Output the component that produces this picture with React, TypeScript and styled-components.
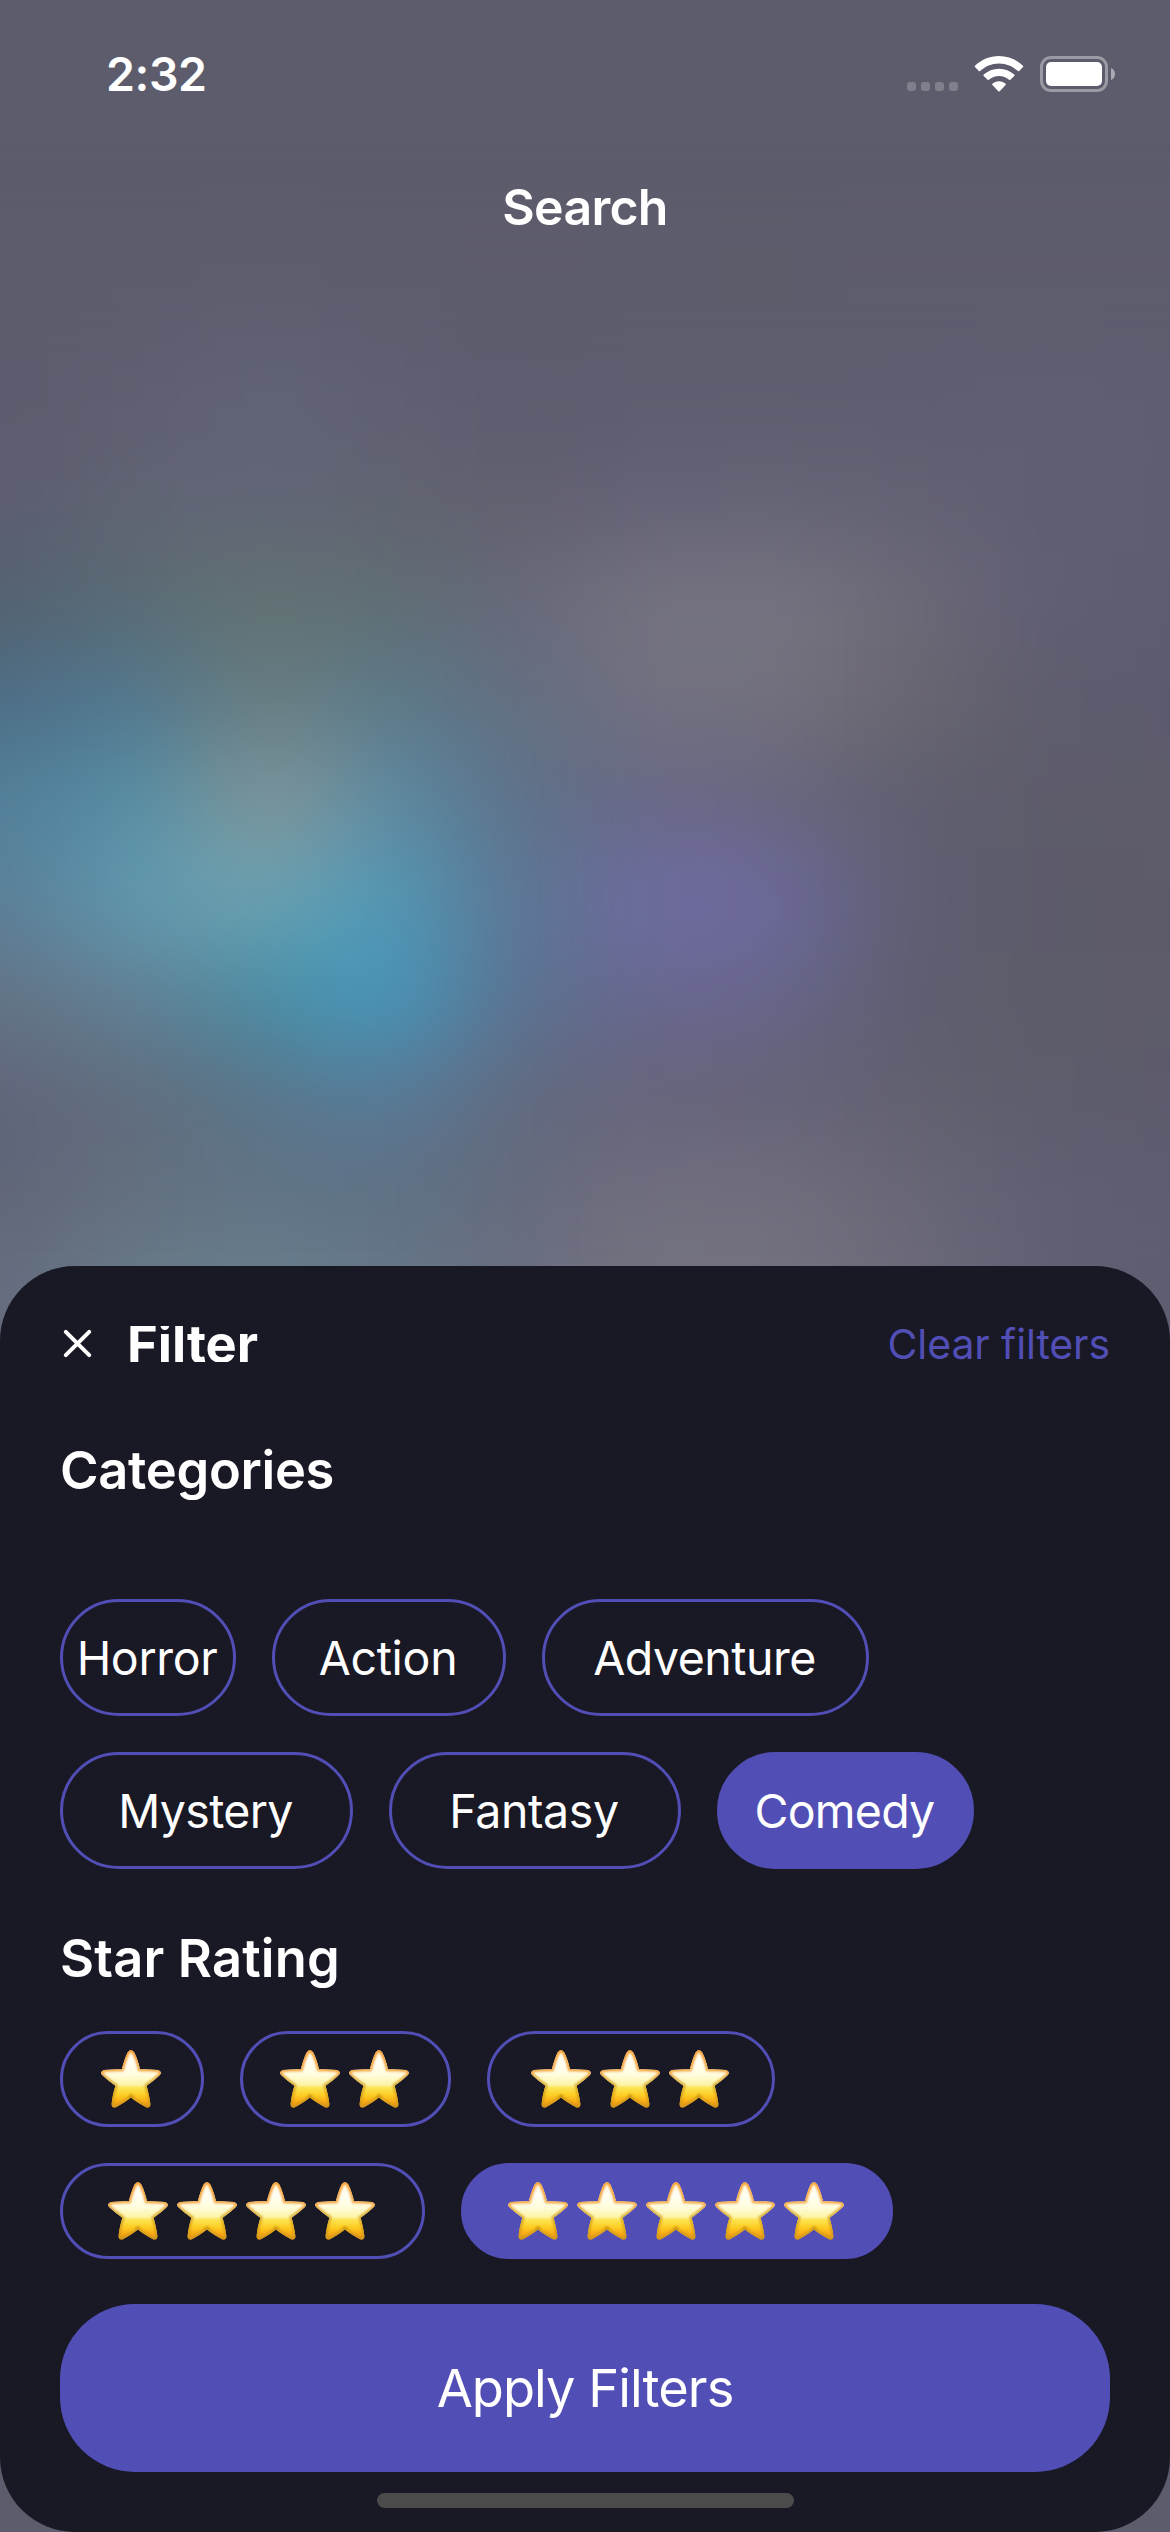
import React, { useState } from "react";
import styled, { createGlobalStyle } from "styled-components";

const ACCENT = "#514eb5";
const SHEET = "#191825";

const GlobalStyle = createGlobalStyle`
  *, *::before, *::after { box-sizing: border-box; }
  body { margin: 0; background: #5d5c6c; }
  button { font: inherit; color: inherit; background: none; border: 0; padding: 0; margin: 0; cursor: pointer; }
  h1, h2 { margin: 0; }
`;

const Screen = styled.main`
  position: relative;
  display: flex;
  flex-direction: column;
  width: 1170px;
  height: 2532px;
  overflow: hidden;
  background: #5d5c6c;
  color: #fff;
  font-family: Inter, "Liberation Sans", sans-serif;
`;

/* Frosted backdrop: bands of colour, softened into each other. */
const Backdrop = styled.div`
  position: absolute;
  inset: 250px -140px auto;
  display: flex;
  flex-direction: column;
  filter: blur(44px);
`;

const Band = styled.div<{ $colors: string[] }>`
  height: 100px;
  background: linear-gradient(
    to right,
    ${({ $colors }) => $colors.map((c, i) => `${c} ${140 + i * 130}px`).join(", ")}
  );
`;

const Spot = styled.div<{ $x: number; $y: number; $w: number; $h: number; $color: string }>`
  position: absolute;
  left: ${({ $x, $w }) => $x - $w / 2}px;
  top: ${({ $y, $h }) => $y - $h / 2}px;
  width: ${({ $w }) => $w}px;
  height: ${({ $h }) => $h}px;
  background: radial-gradient(closest-side, ${({ $color }) => $color}, transparent);
`;

const StatusBar = styled.header`
  position: relative;
  display: flex;
  align-items: center;
  justify-content: space-between;
  height: 148px;
  padding: 0 55px 0 106px;
`;

const Time = styled.span`
  font-size: 46.5px;
  font-weight: 600;
  letter-spacing: -0.46px;
`;

const StatusIcons = styled.div`
  display: flex;
  align-items: center;
`;

const CellDots = styled.div`
  display: flex;
  gap: 5px;
  margin: 25px 16px 0 0;
`;

const CellDot = styled.i`
  width: 9px;
  height: 9px;
  border-radius: 3px;
  background: rgba(255, 255, 255, 0.22);
`;

const WifiIcon = styled.svg`
  width: 50px;
  height: 38px;
  margin-right: 16px;
`;

const BatteryIcon = styled.svg`
  width: 75px;
  height: 36px;
`;

const TitleBar = styled.div`
  position: relative;
  display: flex;
  align-items: center;
  justify-content: center;
  height: 118px;
`;

const ScreenTitle = styled.h1`
  font-size: 50px;
  font-weight: 600;
  letter-spacing: -0.73px;
`;

const Sheet = styled.section`
  position: relative;
  display: flex;
  flex-direction: column;
  height: 1266px;
  margin-top: auto;
  padding: 60px 60px 0;
  border-radius: 75px;
  background: ${SHEET};
`;

const SheetHeader = styled.div`
  display: flex;
  align-items: center;
  height: 36px;
`;

const CloseButton = styled.button`
  display: flex;
  width: 36px;
  height: 36px;
  margin-right: 31px;
`;

const SheetTitle = styled.h2`
  height: 36px;
  overflow: hidden;
  font-size: 52.4px;
  line-height: 36px;
  font-weight: 700;
  letter-spacing: 0;
`;

const ClearButton = styled.button`
  margin-left: auto;
  color: ${ACCENT};
  font-size: 41px;
  line-height: 36px;
  letter-spacing: -0.1px;
`;

const SectionTitle = styled.h2<{ $top: number; $tracking: number }>`
  margin-top: ${({ $top }) => $top}px;
  font-size: 52.4px;
  line-height: 64px;
  font-weight: 600;
  letter-spacing: ${({ $tracking }) => $tracking}px;
`;

const ChipList = styled.div<{ $top: number }>`
  display: flex;
  flex-wrap: wrap;
  gap: 36px;
  margin-top: ${({ $top }) => $top}px;
`;

const Chip = styled.button<{ $width: number; $active: boolean }>`
  display: flex;
  align-items: center;
  justify-content: center;
  width: ${({ $width }) => $width}px;
  border: 3px solid ${ACCENT};
  background: ${({ $active }) => ($active ? ACCENT : "transparent")};
`;

const CategoryChip = styled(Chip)<{ $tracking: number }>`
  height: 117px;
  padding-right: 2px;
  border-radius: 59px;
  font-size: 46.5px;
  letter-spacing: ${({ $tracking }) => $tracking}px;
`;

const StarChip = styled(Chip)`
  height: 96px;
  gap: 9px;
  padding-right: 3px;
  border-radius: 48px;
`;

const StarIcon = styled.svg`
  flex: none;
  width: 60px;
  height: 58px;
`;

const ApplyButton = styled.button`
  height: 168px;
  margin-top: 45px;
  border-radius: 75px;
  background: ${ACCENT};
  font-size: 52.4px;
  letter-spacing: -0.95px;
`;

const HomeIndicator = styled.div`
  width: 417px;
  height: 15px;
  margin: 21px auto 0;
  border-radius: 8px;
  background: #4b4b4b;
`;

const DefsSvg = styled.svg`
  position: absolute;
  width: 0;
  height: 0;
`;

const BANDS: string[][] = [
  ["#5d5d6d", "#5d5d6e", "#5e5e70", "#5d5d6e", "#5d5c6d", "#5d5d6d", "#5d5d6c", "#5e5d6e", "#5e5d6e", "#5e5d6e"],
  ["#5c5b6d", "#5f5f71", "#616377", "#5f6073", "#5d5c6f", "#5e5e70", "#5e5e70", "#5f5e71", "#5f5f73", "#5f5e71"],
  ["#5c5d70", "#606472", "#626678", "#606470", "#62606f", "#646377", "#656476", "#626273", "#605f72", "#5e5e72"],
  ["#53616f", "#596b76", "#637271", "#5f6e74", "#67687a", "#757381", "#767481", "#6c6978", "#605f73", "#5e5d70"],
  ["#4e6d86", "#507890", "#687c80", "#5a7a8a", "#636d80", "#727180", "#73717e", "#69666f", "#5e5d6e", "#5b5b6e"],
  ["#527f98", "#558fa6", "#7a959a", "#5a8ba4", "#5d7188", "#696785", "#67667d", "#5f5f70", "#5d5c6b", "#5f5c6a"],
  ["#5b7e97", "#5f99b0", "#6da4b2", "#5299b6", "#5c7592", "#6d6b9e", "#6b699a", "#5f5e72", "#5c5b6a", "#5d5b6a"],
  ["#637284", "#637f94", "#4b8b9f", "#4795b9", "#5b718f", "#68668c", "#666588", "#5d5e70", "#5d5c69", "#5e5c6a"],
  ["#60647a", "#616c7d", "#5a7488", "#587996", "#61697e", "#67647c", "#656377", "#626170", "#5e5d6d", "#5c5b6c"],
  ["#5f6577", "#64707e", "#627486", "#5f7084", "#656a7c", "#716f7e", "#716f7e", "#696777", "#5f6074", "#5f5d71"],
  ["#666f81", "#6a7b8a", "#69828f", "#67798b", "#6b7080", "#757482", "#757382", "#6d6b7a", "#606175", "#5f5d70"],
];

const CATEGORIES = [
  { name: "Horror", width: 176, tracking: -0.36 },
  { name: "Action", width: 234, tracking: -0.3 },
  { name: "Adventure", width: 327, tracking: -0.5 },
  { name: "Mystery", width: 293, tracking: -0.67 },
  { name: "Fantasy", width: 292, tracking: -0.4 },
  { name: "Comedy", width: 257, tracking: -0.78 },
];

const RATINGS = [
  { stars: 1, width: 144 },
  { stars: 2, width: 211 },
  { stars: 3, width: 288 },
  { stars: 4, width: 365 },
  { stars: 5, width: 432 },
];

const STAR_PATH =
  "M26.6 2.6Q29.9 -2.2 33.3 2.6C36 8 37.6 13.4 39 19.2C44.8 19.2 51 19.3 57 20Q61.8 21.6 58.6 25.2C54.6 29 50.2 32.4 45.6 35.8C47.2 41.8 48.6 47.6 49.4 54Q49.4 58.6 45 57.2C39.6 54.2 34.8 51 29.9 47.4C25 51 20.4 54.2 15 57.2Q10.6 58.6 10.6 54C11.2 47.6 12.6 41.8 14.4 35.8C9.8 32.4 5.4 29 1.4 25.2Q-1.8 21.6 3 20C9 19.3 15.2 19.2 20.9 19.2C22.4 13.4 24 8 26.6 2.6Z";

function Star() {
  return (
    <StarIcon viewBox="0 0 60 58">
      <path d={STAR_PATH} fill="url(#starBody)" />
      <g clipPath="url(#starClip)">
        <path d={STAR_PATH} fill="none" stroke="url(#starRim)" strokeWidth="4.2" filter="url(#starSoft)" />
        <path d="M26.5 48L30 43.5L33.5 48Z" fill="#c4920f" opacity="0.7" filter="url(#starSoft)" />
      </g>
    </StarIcon>
  );
}

function StarDefs() {
  return (
    <DefsSvg aria-hidden="true">
      <defs>
        <linearGradient id="starBody" x1="0" y1="0" x2="0" y2="58" gradientUnits="userSpaceOnUse">
          <stop offset="0" stopColor="#fff6dc" />
          <stop offset="0.2" stopColor="#fffef4" />
          <stop offset="0.42" stopColor="#fffde0" />
          <stop offset="0.6" stopColor="#fdf4a8" />
          <stop offset="0.65" stopColor="#fde455" />
          <stop offset="0.78" stopColor="#fdcd22" />
          <stop offset="0.9" stopColor="#f9a815" />
          <stop offset="1" stopColor="#dd9016" />
        </linearGradient>
        <linearGradient id="starRim" x1="0" y1="0" x2="0" y2="58" gradientUnits="userSpaceOnUse">
          <stop offset="0" stopColor="#fb9a24" />
          <stop offset="0.4" stopColor="#f3a845" />
          <stop offset="0.55" stopColor="#d9b23f" />
          <stop offset="0.75" stopColor="#e3a91c" />
          <stop offset="1" stopColor="#cf9420" />
        </linearGradient>
        <filter id="starSoft" x="-10%" y="-10%" width="120%" height="120%">
          <feGaussianBlur stdDeviation="0.8" />
        </filter>
        <clipPath id="starClip">
          <path d={STAR_PATH} />
        </clipPath>
      </defs>
    </DefsSvg>
  );
}

export default function App() {
  const [category, setCategory] = useState<string | null>("Comedy");
  const [rating, setRating] = useState<number | null>(5);

  const clear = () => {
    setCategory(null);
    setRating(null);
  };

  return (
    <Screen>
      <GlobalStyle />
      <StarDefs />
      <Backdrop>
        {BANDS.map((colors, i) => (
          <Band key={i} $colors={colors} />
        ))}
        <Spot $x={485} $y={725} $w={230} $h={290} $color="rgba(66, 154, 192, 0.4)" />
        <Spot $x={430} $y={550} $w={210} $h={250} $color="rgba(145, 150, 150, 0.35)" />
        <Spot $x={838} $y={655} $w={260} $h={250} $color="rgba(114, 109, 174, 0.38)" />
      </Backdrop>

      <StatusBar>
        <Time>2:32</Time>
        <StatusIcons>
          <CellDots>
            <CellDot />
            <CellDot />
            <CellDot />
            <CellDot />
          </CellDots>
          <WifiIcon viewBox="0 0 50 38" fill="#fff">
            <path d="M25 1C34.2 1 42.8 4.6 49 10.8Q49.6 11.5 49 12.1L45.2 16Q44.6 16.6 43.9 16C38.9 11.2 32.2 8.4 25 8.4S11.1 11.2 6.1 16Q5.4 16.6 4.8 16L1 12.1Q0.4 11.5 1 10.8C7.2 4.6 15.8 1 25 1Z" />
            <path d="M25 13.7C30.8 13.7 36.2 15.9 40.3 19.6Q41 20.3 40.3 21L36.4 24.8Q35.8 25.4 35.1 24.8C32.4 22.4 28.9 21 25 21S17.6 22.4 14.9 24.8Q14.2 25.4 13.6 24.8L9.7 21Q9 20.3 9.7 19.6C13.8 15.9 19.2 13.7 25 13.7Z" />
            <path d="M25 26.3C27.5 26.3 29.8 27.2 31.6 28.7Q32.3 29.4 31.6 30.1L25.7 36.2Q25 36.9 24.3 36.2L18.4 30.1Q17.7 29.4 18.4 28.7C20.2 27.2 22.5 26.3 25 26.3Z" />
          </WifiIcon>
          <BatteryIcon viewBox="0 0 75 36">
            <rect x="1.5" y="1.5" width="65" height="33" rx="9.5" fill="none" stroke="#fff" strokeOpacity="0.38" strokeWidth="3" />
            <rect x="6" y="6" width="56" height="24" rx="5" fill="#fff" />
            <path d="M71 12C73.8 13.2 75 15.4 75 18S73.8 22.8 71 24Z" fill="#fff" fillOpacity="0.48" />
          </BatteryIcon>
        </StatusIcons>
      </StatusBar>

      <TitleBar>
        <ScreenTitle>Search</ScreenTitle>
      </TitleBar>

      <Sheet>
        <SheetHeader>
          <CloseButton aria-label="Close">
            <svg width="36" height="36" viewBox="0 0 36 36" fill="none" stroke="#fff" strokeWidth="4" strokeLinecap="round">
              <path d="M5.8 5.8L29.2 29.2M29.2 5.8L5.8 29.2" />
            </svg>
          </CloseButton>
          <SheetTitle>Filter</SheetTitle>
          <ClearButton onClick={clear}>Clear filters</ClearButton>
        </SheetHeader>

        <SectionTitle $top={76} $tracking={-0.3}>Categories</SectionTitle>
        <ChipList $top={97}>
          {CATEGORIES.map((c) => (
            <CategoryChip
              key={c.name}
              $width={c.width}
              $tracking={c.tracking}
              $active={category === c.name}
              onClick={() => setCategory(c.name)}
            >
              {c.name}
            </CategoryChip>
          ))}
        </ChipList>

        <SectionTitle $top={57} $tracking={0.18}>Star Rating</SectionTitle>
        <ChipList $top={41}>
          {RATINGS.map((r) => (
            <StarChip
              key={r.stars}
              $width={r.width}
              $active={rating === r.stars}
              aria-label={`${r.stars} stars`}
              onClick={() => setRating(r.stars)}
            >
              {Array.from({ length: r.stars }, (_, i) => (
                <Star key={i} />
              ))}
            </StarChip>
          ))}
        </ChipList>

        <ApplyButton>Apply Filters</ApplyButton>
        <HomeIndicator />
      </Sheet>
    </Screen>
  );
}
